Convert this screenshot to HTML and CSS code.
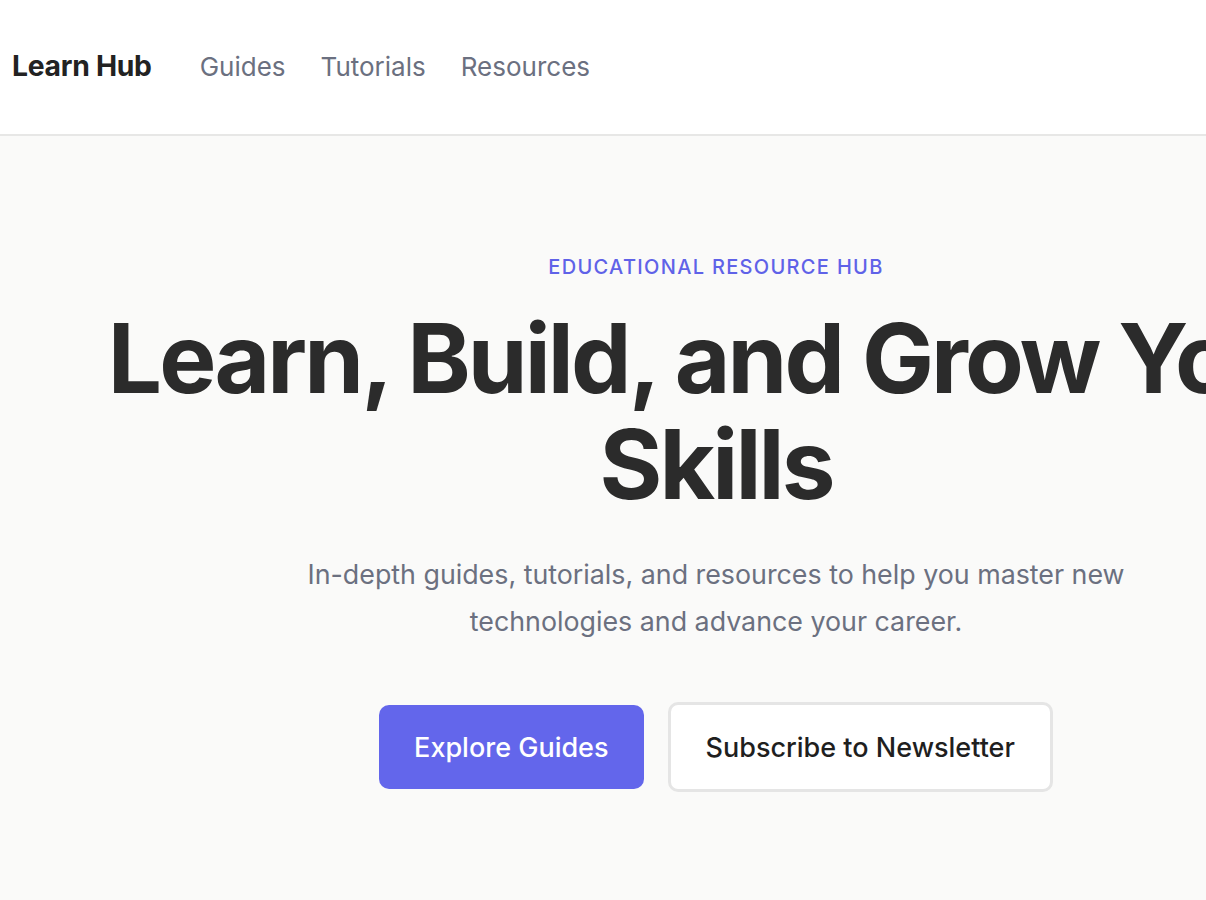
FILE: index.html
```html
<!DOCTYPE html>
<html lang="en">
<head>
<meta charset="utf-8">
<title>Learn Hub</title>
<link rel="stylesheet" href="styles.css">
</head>
<body>
<header class="site-header">
  <a class="brand" href="#">Learn Hub</a>
  <nav class="nav">
    <a class="nav-link" href="#">Guides</a>
    <a class="nav-link" href="#">Tutorials</a>
    <a class="nav-link" href="#">Resources</a>
  </nav>
</header>
<main class="hero">
  <p class="eyebrow">EDUCATIONAL RESOURCE HUB</p>
  <h1 class="title">Learn, Build, and Grow Your Skills</h1>
  <p class="lead">In-depth guides, tutorials, and resources to help you master new technologies and advance your career.</p>
  <div class="actions">
    <a class="btn btn-primary" href="#">Explore Guides</a>
    <a class="btn btn-secondary" href="#">Subscribe to Newsletter</a>
  </div>
</main>
</body>
</html>
```

FILE: styles.css
```css
html {
  overflow-x: hidden;
}
body {
  margin: 0;
  font-family: Inter, "Noto Sans", sans-serif;
  background: #fafaf9;
  color: #2d2d2d;
}
a {
  text-decoration: none;
  color: inherit;
}
.site-header {
  height: 136px;
  box-sizing: border-box;
  padding: 0 0 2px 12px;
  background: #ffffff;
  border-bottom: 2px solid #e7e7e6;
  display: flex;
  align-items: center;
}
.brand {
  font-size: 28.3px;
  font-weight: 700;
  color: #222222;
  letter-spacing: -0.01em;
  margin-right: 48px;
}
.nav {
  display: flex;
  gap: 35px;
}
.nav-link {
  font-size: 26px;
  color: #6b7080;
}
.hero {
  width: 1432px;
  box-sizing: border-box;
  padding: 117px 24px 120px;
  text-align: center;
  background: #fafaf9;
}
.eyebrow {
  margin: 0;
  font-size: 20px;
  line-height: 28px;
  font-weight: 500;
  letter-spacing: 0.066em;
  color: #5f62e8;
}
.title {
  margin: 25px 0 0;
  font-size: 96px;
  line-height: 1.1;
  font-weight: 700;
  letter-spacing: -0.03em;
  color: #2b2b2b;
}
.lead {
  margin: 34px auto 0;
  max-width: 840px;
  font-size: 26.8px;
  line-height: 47px;
  color: #6b7080;
}
.actions {
  margin-top: 57px;
  display: flex;
  justify-content: center;
  align-items: center;
  gap: 24px;
}
.btn {
  font-size: 27px;
  font-weight: 500;
  border-radius: 10px;
  box-sizing: border-box;
  display: flex;
  align-items: center;
  justify-content: center;
}
.btn-primary {
  height: 84px;
  padding: 0 35px;
  background: #6366eb;
  color: #ffffff;
}
.btn-secondary {
  height: 90px;
  padding: 0 35px;
  background: #ffffff;
  border: 3px solid #e5e5e5;
  color: #1f1f1f;
}
```
